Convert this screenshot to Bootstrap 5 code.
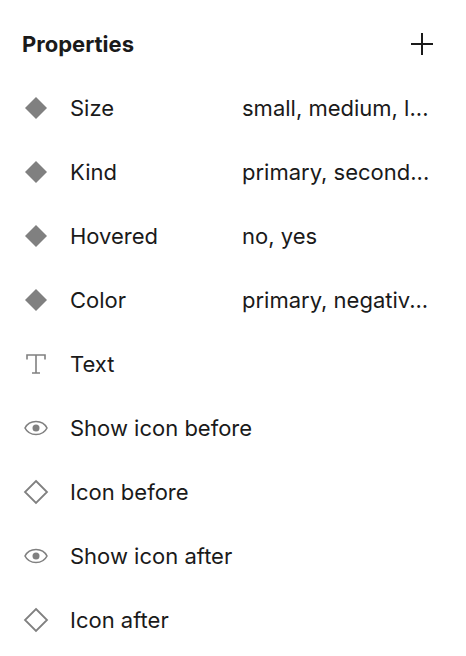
<!DOCTYPE html>
<html lang="en">
<head>
<meta charset="utf-8">
<meta name="viewport" content="width=device-width, initial-scale=1">
<title>Properties</title>
<link rel="stylesheet" href="https://cdn.jsdelivr.net/npm/bootstrap@5.3.0/dist/css/bootstrap.min.css">
<style>
body { font-family: Inter, "Liberation Sans", sans-serif; font-size: 22px; line-height: 32px; color: #1a1a1a; background: #fff; }
.panel { padding: 12px 22px 4px; }
.panel-head, .prop { min-height: 64px; }
.panel-title { font-size: 22px; line-height: 32px; font-weight: 650; }
.add-btn { width: 24px; height: 24px; margin-right: 10px; color: #1a1a1a; }
.prop-icon { width: 28px; height: 28px; margin-right: 20px; color: #808080; }
.prop-name { width: 172px; }
svg { display: block; }
</style>
</head>
<body>
<svg class="d-none" aria-hidden="true">
  <symbol id="variant" viewBox="0 0 28 28"><path d="M14 3 25 14 14 25 3 14Z" fill="currentColor"/></symbol>
  <symbol id="instance" viewBox="0 0 28 28"><path d="M14 3 25 14 14 25 3 14Z" fill="none" stroke="currentColor" stroke-width="1.8"/></symbol>
  <symbol id="text" viewBox="0 0 28 28"><path d="M5 9.5V5H23V9.5M14 5V23M10 23H18" fill="none" stroke="currentColor" stroke-width="1.6"/></symbol>
  <symbol id="eye" viewBox="0 0 28 28"><path d="M3 14C5 10 9 7.5 14 7.5S23 10 25 14C23 18 19 20.5 14 20.5S5 18 3 14Z" fill="none" stroke="currentColor" stroke-width="1.6"/><circle cx="14" cy="14" r="3.5" fill="currentColor"/></symbol>
</svg>
<main class="panel">
  <header class="panel-head d-flex align-items-center justify-content-between">
    <h1 class="panel-title m-0">Properties</h1>
    <button type="button" class="add-btn btn p-0 border-0" aria-label="Add property"><svg width="24" height="24" viewBox="0 0 24 24"><path d="M12 1V23M1 12H23" stroke="currentColor" stroke-width="2"/></svg></button>
  </header>
  <ul class="list-unstyled m-0">
    <li class="prop d-flex align-items-center"><svg class="prop-icon flex-shrink-0"><use href="#variant"/></svg><span class="prop-name flex-shrink-0">Size</span><span class="text-truncate">small, medium, l...</span></li>
    <li class="prop d-flex align-items-center"><svg class="prop-icon flex-shrink-0"><use href="#variant"/></svg><span class="prop-name flex-shrink-0">Kind</span><span class="text-truncate">primary, second...</span></li>
    <li class="prop d-flex align-items-center"><svg class="prop-icon flex-shrink-0"><use href="#variant"/></svg><span class="prop-name flex-shrink-0">Hovered</span><span class="text-truncate">no, yes</span></li>
    <li class="prop d-flex align-items-center"><svg class="prop-icon flex-shrink-0"><use href="#variant"/></svg><span class="prop-name flex-shrink-0">Color</span><span class="text-truncate">primary, negativ...</span></li>
    <li class="prop d-flex align-items-center"><svg class="prop-icon flex-shrink-0"><use href="#text"/></svg><span>Text</span></li>
    <li class="prop d-flex align-items-center"><svg class="prop-icon flex-shrink-0"><use href="#eye"/></svg><span>Show icon before</span></li>
    <li class="prop d-flex align-items-center"><svg class="prop-icon flex-shrink-0"><use href="#instance"/></svg><span>Icon before</span></li>
    <li class="prop d-flex align-items-center"><svg class="prop-icon flex-shrink-0"><use href="#eye"/></svg><span>Show icon after</span></li>
    <li class="prop d-flex align-items-center"><svg class="prop-icon flex-shrink-0"><use href="#instance"/></svg><span>Icon after</span></li>
  </ul>
</main>
<script src="https://cdn.jsdelivr.net/npm/bootstrap@5.3.0/dist/js/bootstrap.bundle.min.js"></script>
</body>
</html>
